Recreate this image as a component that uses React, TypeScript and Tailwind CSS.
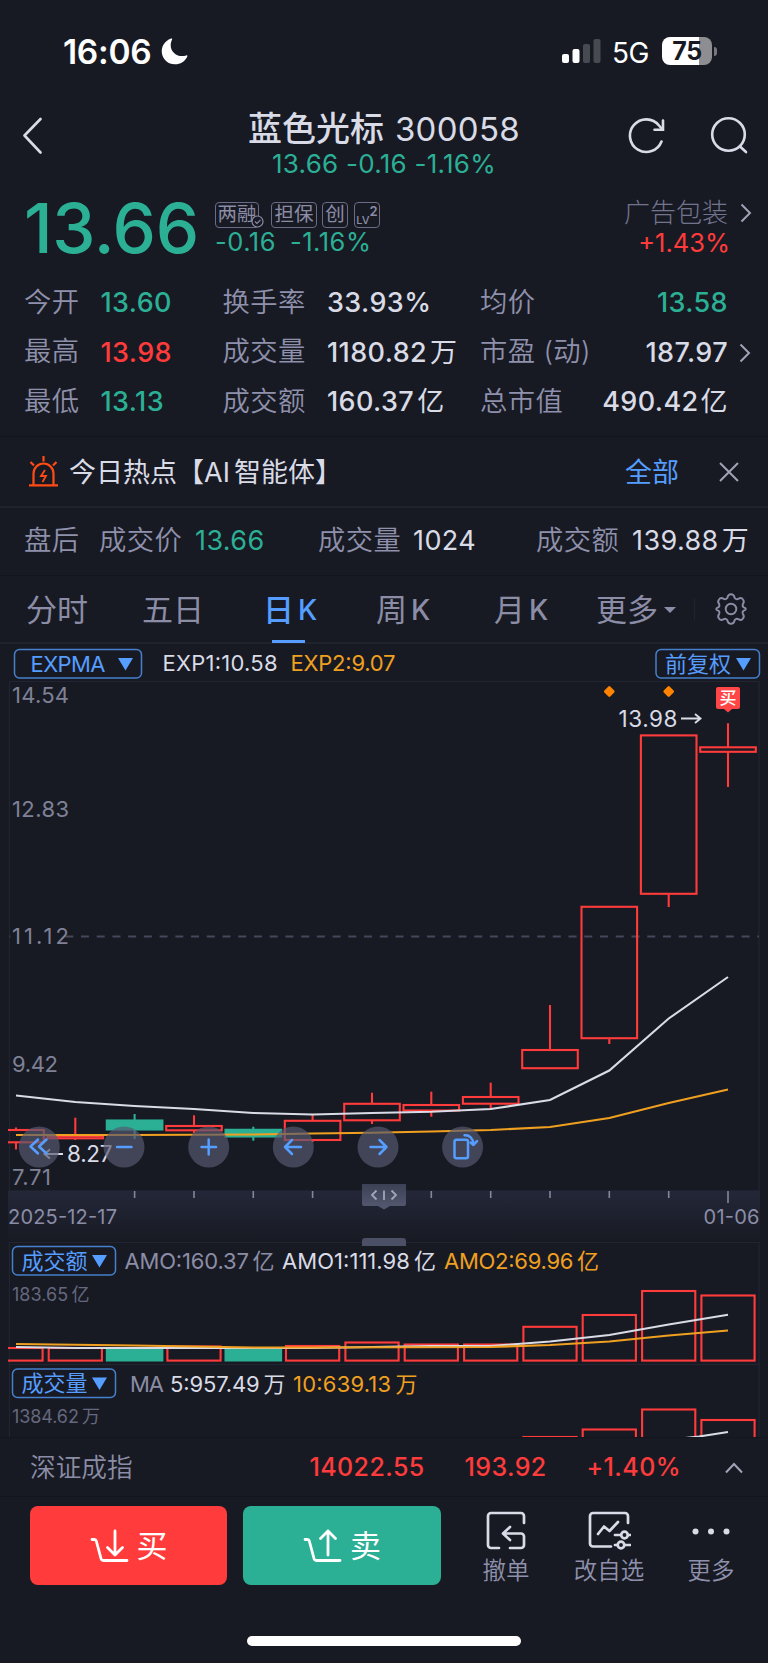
import type { ReactNode } from "react";
import clsx from "clsx";

interface Candle { x: number; top: number; bottom: number; high: number; low: number; down?: boolean; }

const RED = "#ff3b3b";
const GREEN = "#2baf95";
const BLUE = "#559dff";
const ORANGE = "#f0a020";
const LIGHT = "#d9dbe6";
const MUTED = "#8b8da6";

const CANDLES: Candle[] = [
  { x: 16, top: 1130, bottom: 1142.3, high: 1127.5, low: 1149.5 },
  { x: 75.3, top: 1136, bottom: 1138.3, high: 1117.7, low: 1140 },
  { x: 134.6, top: 1120.5, bottom: 1129.5, high: 1114, low: 1139, down: true },
  { x: 194, top: 1126, bottom: 1130.3, high: 1115.3, low: 1133 },
  { x: 253.3, top: 1129.8, bottom: 1136.5, high: 1126.7, low: 1140.7, down: true },
  { x: 312.6, top: 1120.8, bottom: 1140, high: 1115, low: 1142 },
  { x: 372, top: 1103.8, bottom: 1120.3, high: 1092.7, low: 1124 },
  { x: 431.3, top: 1105, bottom: 1110.5, high: 1091.7, low: 1116.7 },
  { x: 490.7, top: 1097, bottom: 1103.7, high: 1082.7, low: 1109.3 },
  { x: 550, top: 1050, bottom: 1068.2, high: 1005, low: 1068 },
  { x: 609.3, top: 906.8, bottom: 1038.2, high: 907, low: 1044 },
  { x: 668.7, top: 735.4, bottom: 893.8, high: 736, low: 907 },
  { x: 728, top: 747.3, bottom: 751.8, high: 723.3, low: 787 },
];

const AMOUNT_TOPS = [1348, 1348, 1347, 1346.5, 1348.5, 1346, 1342.5, 1344.5, 1344.5, 1326.8, 1315, 1291, 1295.5];

const TOOLS = [39.3, 124, 208.7, 293.3, 378, 462.6];

const STATS = [
  ["今开", "13.60", "text-[#2baf95]", "换手率", "33.93", "%", "均价", "13.58", ""],
  ["最高", "13.98", "text-[#ff3b3b]", "成交量", "1180.82", "万", "市盈 (动)", "187.97", ""],
  ["最低", "13.13", "text-[#2baf95]", "成交额", "160.37", "亿", "总市值", "490.42", "亿"],
];

const TABS = [
  { label: "分时", k: "", width: "w-[116px]" },
  { label: "五日", k: "", width: "w-[121px]" },
  { label: "日", k: "K", width: "w-[113px]", active: true },
  { label: "周", k: "K", width: "w-[118px]" },
  { label: "月", k: "K", width: "w-[102px]" },
];

export default function App() {
  return (
    <div className="w-[768px] h-[1663px] overflow-hidden bg-[#181a23] text-[#d9dbe6] flex flex-col whitespace-nowrap [font-family:Inter,'Noto_Sans_CJK_SC',sans-serif]">
      <StatusBar />
      <TitleBar />
      <Quote />
      <HotTopic />
      <AfterHours />
      <PeriodTabs />
      <Chart />
      <IndexBar />
      <ActionBar />
    </div>
  );
}

function StatusBar() {
  return (
    <div className="h-[102px] shrink-0 flex items-center pl-[63px] text-white">
      <span className="w-[98px] pt-[2px] text-[33.500px] font-semibold tracking-[-0.3px]">16:06</span>
      <svg className="w-[27px] h-[27px]" viewBox="0 0 27 27" fill="#fff">
        <path d="M10 .5C3.500 3 .3 8.500.8 14.500 1.500 21.500 7.500 26.500 14 26.300c5.500-.1 10-3 12.300-7.900.3-.8-.3-1.300-1-1-8.800 2.800-15.600-3.200-15.600-10.200 0-2.200.6-4 1.400-5.700C11.400.8 10.800.2 10 .5Z" />
      </svg>
      <svg className="ml-[374px] w-[39px] h-[26px]" viewBox="0 0 39 26">
        <rect x="0" y="16" width="7" height="9" rx="2" fill="#fff" />
        <rect x="10.500" y="11" width="7" height="14" rx="2" fill="#fff" />
        <rect x="21" y="6" width="7" height="19" rx="2" fill="#484a52" />
        <rect x="31.500" y="1" width="7" height="24" rx="2" fill="#484a52" />
      </svg>
      <span className="w-[61px] pl-[11px] text-[28px] tracking-[-0.5px] pt-[3px]">5G</span>
      <div className="w-[50px] h-[28px] rounded-[8px] flex items-center justify-center bg-[linear-gradient(90deg,#fff_75%,#8e8e92_75%)]">
        <span className="text-[#181a23] text-[25px] font-bold tracking-[-0.5px] leading-none">75</span>
      </div>
      <div className="ml-[2px] w-[3px] h-[9px] rounded-r-full bg-[#77787d]" />
    </div>
  );
}

function TitleBar() {
  return (
    <div className="h-[88px] shrink-0 flex justify-between pl-[22px] pr-[20px]">
      <svg className="w-[90px] h-[38px] mt-[14px]" viewBox="0 0 90 38" fill="none" stroke={LIGHT} strokeWidth="2.600" strokeLinecap="round" strokeLinejoin="round">
        <path d="M18.500 3 2.500 19.500l16 17" />
      </svg>
      <div className="flex flex-col items-center pl-[30px]">
        <div className="mt-[4px] h-[44px] flex items-center gap-[11px] leading-none">
          <span className="text-[34px] pt-px font-medium">蓝色光标</span>
          <span className="text-[33px] pt-[2px] tracking-[0.3px]">300058</span>
        </div>
        <span className="text-[26px] leading-[28px] tracking-[0.25px] text-[#2baf95]">13.66 -0.16 -1.16%</span>
      </div>
      <div className="flex gap-[44px] mt-[13px]">
        <svg className="w-[40px] h-[40px]" viewBox="0 0 40 40" fill="none" stroke={LIGHT} strokeWidth="2.600" strokeLinecap="round">
          <path d="M35.500 26.500A16.300 16.300 0 1 1 33 10.500l3 3.500" />
          <path d="M37 5.500v9.300h-8.500" />
        </svg>
        <svg className="w-[38px] h-[40px]" viewBox="0 0 38 40" fill="none" stroke={LIGHT} strokeWidth="2.600" strokeLinecap="round">
          <circle cx="18.500" cy="19.500" r="16.300" />
          <path d="m30 31.500 6 5.500" />
        </svg>
      </div>
    </div>
  );
}

function Badge({ children, className }: { children: ReactNode; className: string }) {
  return (
    <span className={clsx("relative h-[26px] rounded-[4px] border-[1.5px] border-[#6a6c86] flex items-center justify-center text-[19.500px] leading-none text-[#8b8da6]", className)}>
      {children}
    </span>
  );
}

function Quote() {
  return (
    <div className="h-[247px] shrink-0 border-b border-[#11131a]">
      <div className="flex h-[89px] pl-[24px]">
        <span className="w-[191px] pt-[3px] text-[69px] leading-[70px] font-medium tracking-[-0.3px] text-[#2baf95]">13.66</span>
        <div className="w-[400px] pt-[12px]">
          <div className="flex">
            <Badge className="w-[44px] mr-[12px]">
              两融
              <svg className="absolute -right-[6px] -bottom-[1px] w-[13px] h-[13px]" viewBox="0 0 13 13" fill="#181a23" stroke={MUTED} strokeWidth="1.200">
                <circle cx="6.500" cy="6.500" r="5.500" />
                <path d="m4 6.500 2 2 3.500-3.700" />
              </svg>
            </Badge>
            <Badge className="w-[46px] mr-[5px]">担保</Badge>
            <Badge className="w-[26px] mr-[6px]">创</Badge>
            <Badge className="w-[26px]">
              <span className="text-[11px] font-medium pt-[10px]">LV</span>
              <span className="text-[13px] font-semibold pb-[8px]">2</span>
            </Badge>
          </div>
          <div className="flex gap-[14px] text-[25.500px] leading-[28px] tracking-[0.5px] text-[#2baf95]">
            <span>-0.16</span>
            <span>-1.16%</span>
          </div>
        </div>
        <div className="w-[113px] pt-[8px] flex flex-col items-end">
          <span className="text-[26px] leading-[30px] font-light text-[#72748f]">广告包装</span>
          <span className="-mr-[2px] text-[25.500px] leading-[29px] text-[#ff3b3b]">+1.43%</span>
        </div>
        <Chevron className="ml-[12px] mt-[13px]" />
      </div>
      {STATS.map(([a, av, color, b, bv, bu, c, cv, cu], i) => (
        <div key={a} className="h-[49.300px] flex items-center pl-[24px] text-[27px] font-medium tracking-[0.4px]">
          <Label className="w-[76.500px]">{a}</Label>
          <span className={clsx("w-[122px]", color)}>{av}</span>
          <Label className="w-[104.500px]">{b}</Label>
          <span className="w-[153px]">{bv}<span className={bu === "%" ? "" : "ml-[3px] font-normal"}>{bu}</span></span>
          <Label className="w-[110px]">{c}</Label>
          <span className={clsx("w-[138px] text-right", i === 0 && "text-[#2baf95]")}>
            {cv}{cu && <span className="ml-[2px] font-normal">{cu}</span>}
          </span>
          {i === 1 && <Chevron className="ml-[11px]" />}
        </div>
      ))}
    </div>
  );
}

function Label({ children, className }: { children: ReactNode; className?: string }) {
  return <span className={clsx("text-[27.300px] font-[350] text-[#8f91ac]", className)}>{children}</span>;
}

function Chevron({ className }: { className?: string }) {
  return (
    <svg className={clsx("w-[12px] h-[20px]", className)} viewBox="0 0 12 20" fill="none" stroke="#a0a2b6" strokeWidth="2">
      <path d="m1.500 1.500 8.500 8.500-8.500 8.500" />
    </svg>
  );
}

function HotTopic() {
  return (
    <div className="h-[71px] shrink-0 flex items-center border-b-2 border-[#20232e] pl-[28px] text-[27px]">
      <svg className="w-[31px] h-[31px]" viewBox="0 0 31 31" fill="none" stroke="#ff4b14" strokeWidth="2.200">
        <path d="M1 29.300h29M5.500 29V17.500a10 10 0 0 1 20 0V29M15.500 0v5.500M2.500 6l3.500 3.500M28.500 6 25 9.500" />
        <path d="m17 14-4 6h5l-3.500 6" strokeWidth="1.800" />
      </svg>
      <span className="ml-[10px] pt-[3px] w-[556px]">今日热点【AI<span className="ml-[4px]">智能体】</span></span>
      <span className="pt-[3px] w-[94px] text-[#559dff]">全部</span>
      <svg className="w-[20px] h-[20px] mt-[1px]" viewBox="0 0 20 20" stroke="#a0a2b6" strokeWidth="2">
        <path d="m1 1 18 18M19 1 1 19" />
      </svg>
    </div>
  );
}

function AfterHours() {
  return (
    <div className="h-[68px] shrink-0 flex items-center border-b border-[#13151c] pl-[24px] text-[27px] tracking-[0.4px]">
      <Label className="w-[75px]">盘后</Label>
      <Label className="w-[96px]">成交价</Label>
      <span className="w-[123px] text-[#2baf95]">13.66</span>
      <Label className="w-[95px]">成交量</Label>
      <span className="w-[123px]">1024</span>
      <Label className="w-[96px]">成交额</Label>
      <span>139.88<span className="ml-[3px]">万</span></span>
    </div>
  );
}

function PeriodTabs() {
  return (
    <div className="h-[68px] shrink-0 flex items-center border-b-2 border-[#20222d] pl-[26px] text-[31px] text-[#8b8da6]">
      {TABS.map(({ label, k, width, active }) => (
        <div key={label} className={clsx("relative h-[66px] pt-[2px] flex items-center", width, active ? "text-[#559dff] font-medium" : "font-normal")}>
          {label}
          {k && <span className="ml-[4px] text-[28px] font-medium">{k}</span>}
          {active && <span className="absolute left-[9px] -bottom-px w-[33px] h-[3px] bg-[#559dff]" />}
        </div>
      ))}
      <div className="flex items-center w-[98px] pt-[2px] font-normal">
        更多
        <span className="ml-[6px] border-x-[6px] border-t-[6px] border-x-transparent border-t-[#8b8da6]" />
      </div>
      <div className="w-px h-[22px] bg-[#20222d]" />
      <svg className="ml-[20px] w-[32px] h-[32px]" viewBox="0 0 32 32" fill="none" stroke={MUTED} strokeWidth="1.900" strokeLinejoin="round">
        <path d="M16 1.200c2.200 0 3.300 1.500 3.700 3.800 1.200 1.500 2.500 1.600 3.600.8 1.800-1 3.600-.9 4.700.7 1.200 1.500 1 3.200-.2 4.700-.5 1.700 0 2.700 1 3.100 1.300.4 2 .9 2 1.700s-.7 1.300-2 1.700c-1 .4-1.500 1.400-1 3.100 1.200 1.500 1.400 3.200.2 4.700-1.100 1.600-2.900 1.700-4.700.7-1.100-.8-2.400-.7-3.600.8-.4 2.300-1.500 3.800-3.700 3.800s-3.300-1.500-3.700-3.800c-1.200-1.500-2.500-1.600-3.600-.8-1.800 1-3.600.9-4.700-.7-1.200-1.500-1-3.200.2-4.700.5-1.700 0-2.700-1-3.100-1.300-.4-2-.9-2-1.700s.7-1.300 2-1.700c1-.4 1.500-1.400 1-3.100C3 9.700 2.800 8 4 6.500c1.100-1.600 2.900-1.700 4.700-.7 1.100.8 2.400.7 3.600-.8.400-2.300 1.500-3.800 3.700-3.800Z" />
        <circle cx="16" cy="16" r="5.300" />
      </svg>
    </div>
  );
}

function T({ x, y, w, size, fill, children }: { x: number; y: number; w: number; size: number; fill: string; children: ReactNode }) {
  return <text x={x} y={y} textLength={w} fontSize={size} fill={fill}>{children}</text>;
}

function Pill({ x, y, w, label, tx, tw }: { x: number; y: number; w: number; label: string; tx: number; tw: number }) {
  const t = x + w - 16;
  return (
    <g>
      <rect x={x} y={y} width={w} height="28.500" rx="5" fill="none" stroke="#4480cc" strokeWidth="1.500" />
      <T x={tx} y={y + 22} w={tw} size={22} fill={BLUE}>{label}</T>
      <path d={`M${t - 7.500} ${y + 8.500}h15l-7.500 12.500Z`} fill={BLUE} />
    </g>
  );
}

function Bar({ x, top, bottom, down }: { x: number; top: number; bottom: number; down?: boolean }) {
  if (down) return <rect x={x - 28.800} y={top} width="57.600" height={bottom - top} fill={GREEN} />;
  return <rect x={x - 26.600} y={top} width="53.200" height={bottom - top} fill="none" stroke={RED} strokeWidth="2.100" />;
}

function Chart() {
  return (
    <svg className="w-[768px] h-[793px] shrink-0 [font-family:Inter,'Noto_Sans_CJK_SC',sans-serif]" viewBox="0 644 768 793">
      <defs>
        <linearGradient id="axis" x1="0" y1="0" x2="0" y2="1">
          <stop offset="0" stopColor="#232738" />
          <stop offset="1" stopColor="#181a23" />
        </linearGradient>
        <linearGradient id="grip" x1="0" y1="0" x2="0" y2="1">
          <stop offset="0" stopColor="#3d4155" />
          <stop offset="1" stopColor="#555a72" />
        </linearGradient>
        <clipPath id="plot"><rect x="8" y="644" width="752" height="793" /></clipPath>
      </defs>

      <Pill x={14.500} y={649.500} w={127} label="EXPMA" tx={30.500} tw={75} />
      <T x={162.500} y={671} w={115} size={22} fill={LIGHT}>EXP1:10.58</T>
      <T x={290.500} y={671} w={105} size={22} fill={ORANGE}>EXP2:9.07</T>
      <Pill x={656} y={649.500} w={103.500} label="前复权" tx={665} tw={66} />

      {/* Frame, grid and price scale */}
      <path d="M9.500 1190V681.500H759V1190M9.500 1437V1242.500H759V1437M9.500 1364.500H759" fill="none" stroke="#222531" strokeWidth="1.200" />
      <path d="M9.500 936.500H759" stroke="#45475a" strokeWidth="2" strokeDasharray="8 7.730" strokeDashoffset="7.200" />
      <rect x="12" y="926" width="51" height="20" fill="#181a23" />
      {[["14.54", 703], ["12.83", 816.500], ["11.12", 944], ["9.42", 1071.500], ["7.71", 1185]].map(([label, y]) => (
        <T key={label} x={12} y={Number(y)} w={label === "9.42" ? 46 : label === "7.71" ? 39 : 57} size={22} fill="#7f8196">{label}</T>
      ))}

      {/* Candles */}
      <g clipPath="url(#plot)">
        {CANDLES.map(({ x, top, bottom, high, low, down }) => (
          <g key={x} stroke={down ? GREEN : RED} strokeWidth="2.100">
            {high < top && <path d={`M${x} ${high}V${top}`} />}
            {low > bottom && <path d={`M${x} ${bottom}V${low}`} />}
            <rect x={x - 27.800} y={top} width="55.600" height={bottom - top} fill={down ? GREEN : "none"} />
          </g>
        ))}
      </g>
      <path d="M16 1095.500 75.300 1102l59.300 4 59.400 3 59.300 4 59.300 1.500 59.400-1.500 59.300-1.300 59.400-2.700 59.300-9 59.300-29.500 59.400-52L728 977" fill="none" stroke={LIGHT} strokeWidth="2.100" />
      <path d="M16 1135h118.600l118.700-.5 59.300-1 59.400-.8 59.300-1.200 59.400-1.500 59.300-3 59.300-9 59.400-15 59.300-13.500" fill="none" stroke={ORANGE} strokeWidth="2.100" />

      <path d="m609.300 687.500 4 4-4 4-4-4ZM668.700 687.500l4 4-4 4-4-4Z" fill="#ff8200" stroke="#ff8200" strokeWidth="2.600" strokeLinejoin="round" />
      <path d="M718 687h20a2 2 0 0 1 2 2v18a2 2 0 0 1-2 2h-6l-4 3.500-4-3.500h-6a2 2 0 0 1-2-2v-18a2 2 0 0 1 2-2Z" fill="#ff4545" />
      <text x="728" y="704" fontSize="17" textAnchor="middle" fontWeight="500" fill="#fff">买</text>
      <T x={618.500} y={726.800} w={59} size={22.500} fill={LIGHT}>13.98</T>
      <path d="M681 718.500h19m-5-4.500 5.500 4.500-5.500 4.500" fill="none" stroke={LIGHT} strokeWidth="1.900" />
      <T x={67} y={1162} w={45.500} size={22.500} fill={LIGHT}>8.27</T>
      <path d="M63 1154H45m5-4.500-5.500 4.500 5.500 4.500" fill="none" stroke={LIGHT} strokeWidth="1.900" />

      {/* Date axis */}
      <rect x="8" y="1190.500" width="752" height="51.500" fill="url(#axis)" />
      {CANDLES.slice(2).map(({ x }) => (
        <path key={x} d={x === 728 ? "M728 1191v12" : `M${x} 1191v7`} stroke="#85889b" strokeWidth="1.600" />
      ))}
      <T x={8} y={1223.500} w={109} size={20} fill={MUTED}>2025-12-17</T>
      <T x={703.500} y={1223.500} w={56} size={20} fill={MUTED}>01-06</T>
      <path d="M362 1184h44v20q0 2-2 2h-14l-6 3.500-6-3.500h-14q-2 0-2-2Z" fill="url(#grip)" />
      <path d="M376.500 1190.500 372 1195l4.500 4.500M391.500 1190.500l4.500 4.500-4.500 4.500M384 1190.500v9.500" fill="none" stroke="#a3a6ba" strokeWidth="1.800" />
      <path d="M362 1246v-5q0-3 3-3h38q3 0 3 3v5Z" fill="#4c5066" />

      {/* Floating tools */}
      {TOOLS.map((x) => <circle key={x} cx={x} cy="1147" r="20.500" fill="#575a72" fillOpacity=".68" />)}
      <g fill="none" stroke={BLUE} strokeWidth="2.500" strokeLinecap="round" strokeLinejoin="round">
        <path d="m38 1139.500-7.500 7 7.500 7M46.500 1139.500l-7.500 7 7.500 7" />
        <path d="M117 1147h14.500M201.500 1147h14.500M208.700 1139.500v15" />
        <path d="M301 1147h-15m6-7-7 7 7 7M370.500 1147h15m-6-7 7 7-7 7" />
        <rect x="454.500" y="1139.800" width="13.500" height="18.400" rx="2" />
        <path d="M464.500 1135.300c5-.5 8.500 3 9 8.700m-3-1.500 3 2.500 3.500-3.800" />
      </g>

      {/* Amount panel */}
      <Pill x={12.500} y={1246.500} w={103} label="成交额" tx={21.500} tw={66} />
      <T x={124.500} y={1269} w={150} size={22} fill={MUTED}>{"AMO:160.37\u2009亿"}</T>
      <T x={282} y={1269} w={154} size={22} fill={LIGHT}>{"AMO1:111.98\u2009亿"}</T>
      <T x={444} y={1269} w={155} size={22} fill={ORANGE}>{"AMO2:69.96\u2009亿"}</T>
      <T x={12} y={1301} w={77.500} size={18} fill="#65687e">{"183.65\u2009亿"}</T>
      <g clipPath="url(#plot)">
        {CANDLES.map(({ x, down }, i) => <Bar key={x} x={x} top={AMOUNT_TOPS[i]} bottom={down ? 1361.500 : 1360.600} down={down} />)}
        <path d="m16 1347 59.300 1h237.300l118.700-2h59.400l59.300-4.500 59.300-6.500 59.400-10.500 59.300-9.800" fill="none" stroke={LIGHT} strokeWidth="2.100" />
        <path d="m16 1344 118.600 1.500 118.700 2h59.300l178.100-.5 59.300-2 59.300-3.500 59.400-6 59.300-5" fill="none" stroke={ORANGE} strokeWidth="2.100" />
      </g>

      {/* Volume panel */}
      <Pill x={12.500} y={1369} w={103} label="成交量" tx={21.500} tw={66} />
      <T x={130} y={1391.500} w={34} size={22} fill={MUTED}>MA</T>
      <T x={170} y={1391.500} w={115.500} size={22} fill={LIGHT}>{"5:957.49\u2009万"}</T>
      <T x={293} y={1391.500} w={124.500} size={22} fill={ORANGE}>{"10:639.13\u2009万"}</T>
      <T x={12} y={1423} w={88} size={18} fill="#65687e">{"1384.62\u2009万"}</T>
      <Bar x={550} top={1437} bottom={1480} />
      <Bar x={609.300} top={1429.500} bottom={1480} />
      <Bar x={668.700} top={1409.500} bottom={1480} />
      <Bar x={728} top={1420} bottom={1480} />
      <path d="m685 1438 14-1.500 29-4.500" fill="none" stroke={LIGHT} strokeWidth="2.100" />
    </svg>
  );
}

function IndexBar() {
  return (
    <div className="h-[60px] shrink-0 flex items-center border-y border-[#13151c] pt-[2px] pl-[30px] text-[25px] text-[#ff3b3b] font-medium tracking-[0.4px]">
      <span className="w-[279.500px] text-[25.700px] tracking-normal font-[350] text-[#8b8da6]">深证成指</span>
      <span className="w-[155px]">14022.55</span>
      <span className="w-[122px]">193.92</span>
      <span className="w-[138px]">+1.40%</span>
      <svg className="w-[18px] h-[12px]" viewBox="0 0 18 12" fill="none" stroke="#a0a2b6" strokeWidth="2">
        <path d="m1 10.500 8-8.500 8 8.500" />
      </svg>
    </div>
  );
}

function ActionBar() {
  return (
    <div className="h-[166px] shrink-0 flex flex-col justify-between pt-[9px] pb-[17px]">
      <div className="flex pl-[30px]">
        <button className="w-[197px] h-[79px] rounded-[8px] bg-[#ff3b3b] text-white text-[31px] flex items-center justify-center gap-[8px]">
          <TradeIcon arrow="M25 2v24m-7.500-7.500L25 26l7.500-7.500" />
          <span className="pt-[2px]">买</span>
        </button>
        <button className="ml-[16px] w-[198px] h-[79px] rounded-[8px] bg-[#2baf95] text-white text-[31px] flex items-center justify-center gap-[8px]">
          <TradeIcon arrow="M25 26V2m-7.500 7.500L25 2l7.500 7.500" />
          <span className="pt-[2px]">卖</span>
        </button>
        <Action label="撤单" className="ml-[25px] w-[80px]">
          <path d="M39 12V5a3 3 0 0 0-3-3H6a3 3 0 0 0-3 3v29a3 3 0 0 0 3 3h8M25 16l-7 6.500 7 6.500M19 22.500h17a3 3 0 0 1 3 3V34a3 3 0 0 1-3 3H25" />
        </Action>
        <Action label="改自选" className="ml-[13px] w-[100px]">
          <path d="M40 12V5a3 3 0 0 0-3-3H5a3 3 0 0 0-3 3v27.500a3 3 0 0 0 3 3h18M10 23l6-7.500 5.500 4.500 8.500-9" />
          <path d="M27 24h5.500M40 24h3M27 34h2M37 34h6" />
          <circle cx="36.500" cy="24" r="3.300" />
          <circle cx="33" cy="34" r="3.300" />
        </Action>
        <Action label="更多" className="ml-[12px] w-[80px]">
          <g fill={LIGHT} stroke="none">
            <circle cx="5.500" cy="20.500" r="3" />
            <circle cx="21" cy="20.500" r="3" />
            <circle cx="36.500" cy="20.500" r="3" />
          </g>
        </Action>
      </div>
      <div className="ml-[247px] w-[274px] h-[10px] rounded-full bg-white" />
    </div>
  );
}

function TradeIcon({ arrow }: { arrow: string }) {
  return (
    <svg className="w-[39px] h-[34px]" viewBox="0 0 39 34" fill="none" stroke="#fff" strokeWidth="2.800" strokeLinecap="round" strokeLinejoin="round">
      <path d="M2 10.500h2.500c1 0 1.500.5 1.800 1.500L11 29.500c.3 1.200 1 2 2.300 2H37" />
      <path d={arrow} />
    </svg>
  );
}

function Action({ label, className, children }: { label: string; className: string; children: ReactNode }) {
  return (
    <div className={clsx("flex flex-col items-center pt-[5px]", className)}>
      <svg className="w-[44px] h-[40px]" viewBox="-1 0 44 40" fill="none" stroke={LIGHT} strokeWidth="2.700" strokeLinecap="round" strokeLinejoin="round">
        {children}
      </svg>
      <span className="mt-[4px] text-[23.500px] leading-[32px] font-[350] text-[#8f91ac]">{label}</span>
    </div>
  );
}
